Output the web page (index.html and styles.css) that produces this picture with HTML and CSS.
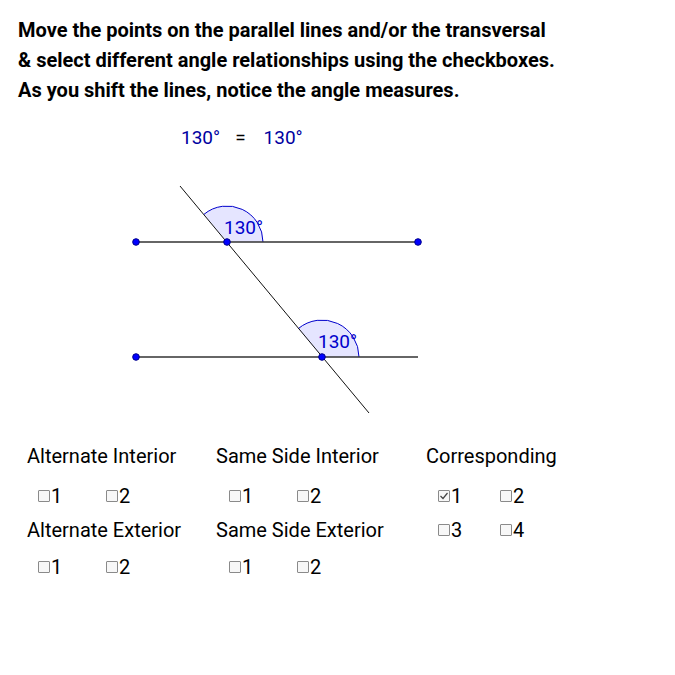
FILE: index.html
```html
<!DOCTYPE html>
<html>
<head>
<meta charset="utf-8">
<link rel="stylesheet" href="styles.css">
</head>
<body>
<div class="applet">
  <div class="intro">
    <div>Move the points on the parallel lines and/or the transversal</div>
    <div>&amp; select different angle relationships using the checkboxes.</div>
    <div>As you shift the lines, notice the angle measures.</div>
  </div>
  <div class="equation"><span class="blue">130°</span><span class="eq">=</span><span class="blue">130°</span></div>
  <svg class="diagram" width="675" height="270" viewBox="0 150 675 270" xmlns="http://www.w3.org/2000/svg">
    <path d="M263 242 A36 36 0 0 0 203.9 214.4 L227 242 Z" fill="rgba(0,0,255,0.1)" stroke="none"/>
    <path d="M263 242 A36 36 0 0 0 203.9 214.4" fill="none" stroke="#0000cc" stroke-width="1"/>
    <path d="M359 357 A37 37 0 0 0 298.2 328.7 L322 357 Z" fill="rgba(0,0,255,0.1)" stroke="none"/>
    <path d="M359 357 A37 37 0 0 0 298.2 328.7" fill="none" stroke="#0000cc" stroke-width="1"/>
    <line x1="136" y1="242" x2="418" y2="242" stroke="#333" stroke-width="1.3"/>
    <line x1="136" y1="357" x2="418" y2="357" stroke="#333" stroke-width="1.3"/>
    <line x1="180" y1="186" x2="369" y2="413" stroke="#111" stroke-width="1"/>
    <text x="224" y="234" class="angle-label">130°</text>
    <text x="318" y="348" class="angle-label">130°</text>
    <g fill="#0000ff" stroke="#00008b" stroke-width="1">
      <circle cx="136" cy="242" r="3.3"/>
      <circle cx="418" cy="242" r="3.3"/>
      <circle cx="227" cy="242" r="3.3"/>
      <circle cx="136" cy="357" r="3.3"/>
      <circle cx="322" cy="357" r="3.3"/>
    </g>
  </svg>
  <div class="controls">
    <div class="heading">Alternate Interior</div>
    <div class="heading">Same Side Interior</div>
    <div class="heading">Corresponding</div>

    <div class="boxes b1"><span class="cb"><span class="box"></span>1</span><span class="cb"><span class="box"></span>2</span></div>
    <div class="boxes b2"><span class="cb"><span class="box"></span>1</span><span class="cb"><span class="box"></span>2</span></div>
    <div class="boxes b3"><span class="cb"><span class="box"><svg width="10" height="10" viewBox="0 0 10 10"><path d="M1.5 5 L4 7.5 L8.5 2" fill="none" stroke="#444" stroke-width="1.2"/></svg></span>1</span><span class="cb"><span class="box"></span>2</span></div>

    <div class="heading">Alternate Exterior</div>
    <div class="heading">Same Side Exterior</div>
    <div class="boxes b3"><span class="cb"><span class="box"></span>3</span><span class="cb"><span class="box"></span>4</span></div>

    <div class="boxes b1"><span class="cb"><span class="box"></span>1</span><span class="cb"><span class="box"></span>2</span></div>
    <div class="boxes b2"><span class="cb"><span class="box"></span>1</span><span class="cb"><span class="box"></span>2</span></div>
    <div></div>
  </div>
</div>
</body>
</html>
```
FILE: styles.css
```css
html, body {
  margin: 0;
  padding: 0;
  background: #ffffff;
}
.applet {
  width: 675px;
  height: 675px;
  font-family: Roboto, "Liberation Sans", sans-serif;
  color: #000;
}
.intro {
  padding: 15px 0 0 18px;
  font-weight: bold;
  font-size: 20px;
  line-height: 30px;
}
.equation {
  margin-top: 21px;
  padding-left: 181px;
  font-size: 19px;
  line-height: 24px;
  height: 24px;
}
.blue {
  color: #0000a0;
}
.eq {
  display: inline-block;
  margin: 0 18px 0 15px;
}
.diagram {
  display: block;
}
.angle-label {
  font-family: Roboto, "Liberation Sans", sans-serif;
  font-size: 19px;
  fill: #0000cc;
}
.controls {
  display: grid;
  grid-template-columns: 189px 210px 200px;
  grid-template-rows: 36px 44px 24px 50px;
  margin-top: 18px;
  padding-left: 27px;
  font-size: 20px;
  align-items: center;
}
.heading {
  white-space: nowrap;
}
.boxes {
  display: flex;
  align-items: center;
}
.cb {
  display: inline-flex;
  align-items: center;
  width: 68px;
}
.b3 .cb {
  width: 62px;
}
.box {
  display: inline-block;
  box-sizing: border-box;
  width: 12px;
  height: 12px;
  border: 1px solid #8a8a8a;
  border-radius: 1px;
  background: #f7f7f7;
  margin-right: 1px;
}
.box svg {
  display: block;
}
.b1 { padding-left: 11px; }
.b2 { padding-left: 13px; }
.b3 { padding-left: 12px; }
```
